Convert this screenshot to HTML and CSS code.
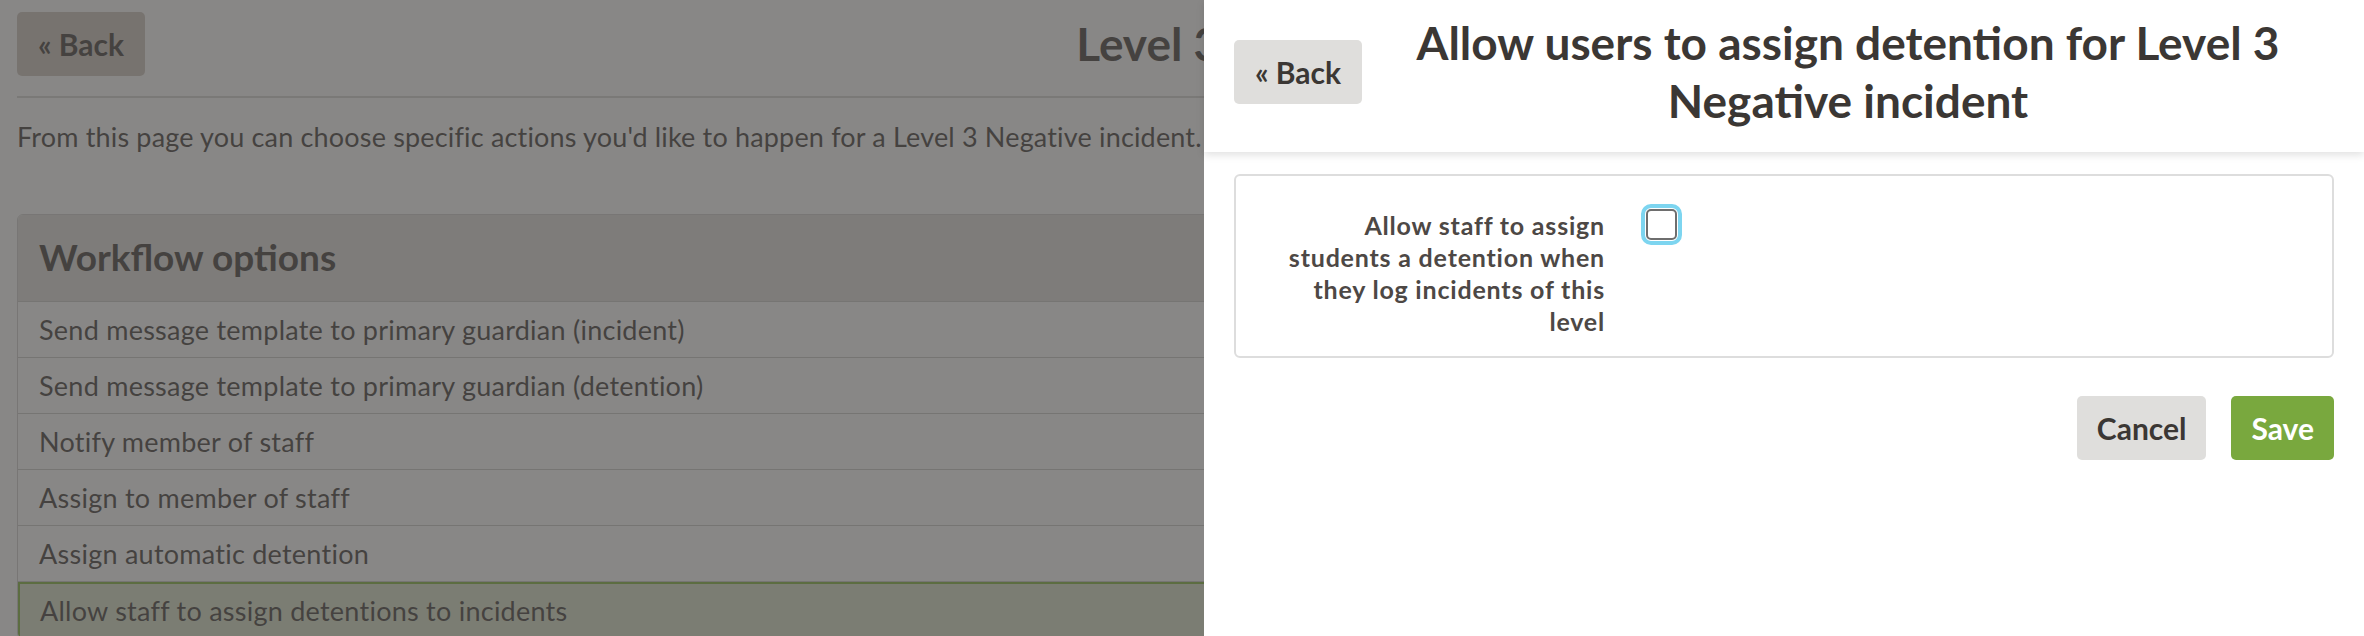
FILE: index.html
```html
<!DOCTYPE html>
<html lang="en">
<head>
<meta charset="utf-8">
<title>Level 3 Negative incident workflow</title>
<link rel="stylesheet" href="styles.css">
</head>
<body>
  <main class="page">
    <header class="page-head">
      <a class="btn btn-back btn-back--page" href="#">« Back</a>
      <h1 class="page-title">Level 3 Negative</h1>
    </header>
    <p class="intro">From this page you can choose specific actions you'd like to happen for a Level 3 Negative incident.</p>
    <section class="panel">
      <div class="panel-head"><h2 class="panel-title">Workflow options</h2></div>
      <ul class="options">
        <li class="option">Send message template to primary guardian (incident)</li>
        <li class="option">Send message template to primary guardian (detention)</li>
        <li class="option">Notify member of staff</li>
        <li class="option">Assign to member of staff</li>
        <li class="option">Assign automatic detention</li>
        <li class="option option--active">Allow staff to assign detentions to incidents</li>
      </ul>
    </section>
  </main>

  <div class="overlay"></div>

  <aside class="drawer">
    <header class="drawer-head">
      <a class="btn btn-back" href="#">« Back</a>
      <h2 class="drawer-title">Allow users to assign detention for Level 3 Negative incident</h2>
    </header>
    <div class="drawer-body">
      <div class="form-box">
        <div class="field">
          <label class="field-label" for="allow">Allow staff to assign students a detention when they log incidents of this level</label>
          <span class="checkbox" id="allow" role="checkbox" aria-checked="false" tabindex="0"></span>
        </div>
      </div>
      <div class="actions">
        <button class="btn btn-cancel" type="button">Cancel</button>
        <button class="btn btn-save" type="button">Save</button>
      </div>
    </div>
  </aside>
</body>
</html>
```

FILE: styles.css
```css
* { box-sizing: border-box; }

html, body {
  margin: 0;
  padding: 0;
  height: 100%;
  overflow: hidden;
  background: #ffffff;
  font-family: Lato, "Open Sans", "Liberation Sans", sans-serif;
  color: #3b3734;
}

.page {
  padding: 12px 17px 0 17px;
}

.page-head {
  display: flex;
  align-items: center;
  padding-bottom: 20px;
  border-bottom: 2px solid #d6d5d3;
}

.btn {
  display: inline-flex;
  align-items: center;
  justify-content: center;
  height: 64px;
  padding: 0 20px;
  border: 0;
  border-radius: 5px;
  font-family: Lato, "Open Sans", "Liberation Sans", sans-serif;
  font-weight: 700;
  font-size: 30px;
  color: #3b3734;
  text-decoration: none;
  background: #dfdedc;
  cursor: pointer;
}

.btn-back { width: 128px; }
.btn-back--page { background: #cec5bd; }

.page-title {
  flex: 1;
  margin: 0;
  text-align: center;
  font-size: 46px;
  line-height: 58px;
  font-weight: 700;
}

.intro {
  margin: 21px 0 0 0;
  font-size: 27px;
  line-height: 36px;
  letter-spacing: 0.17px;
}

.panel {
  margin-top: 59px;
  border: 1px solid #cfcecc;
  border-radius: 6px;
  overflow: hidden;
}

.panel-head {
  background: #e0dfdd;
  padding: 18px 21px 20px 21px;
  border-bottom: 1px solid #cbcac8;
}

.panel-title {
  margin: 0;
  font-size: 37px;
  line-height: 48px;
  font-weight: 700;
}

.options {
  list-style: none;
  margin: 0;
  padding: 0;
}

.option {
  height: 56px;
  display: flex;
  align-items: center;
  padding: 0 21px;
  font-size: 27px;
  letter-spacing: 0.25px;
  border-bottom: 1px solid #cbcac8;
}

.option--active {
  background: #dae2c6;
  border: 2px solid #7fb236;
  padding-left: 20px;
}

.overlay {
  position: fixed;
  inset: 0;
  background: rgba(74, 73, 71, 0.66);
}

.drawer {
  position: fixed;
  top: 0;
  right: 0;
  bottom: 0;
  width: 1160px;
  background: #ffffff;
  display: flex;
  flex-direction: column;
}

.drawer-head {
  height: 152px;
  padding: 0 30px 8px 30px;
  display: flex;
  align-items: center;
  box-shadow: 0 3px 8px rgba(0, 0, 0, 0.12);
  position: relative;
}

.drawer-title {
  flex: 1;
  margin: 0;
  text-align: center;
  font-size: 46px;
  line-height: 58px;
  font-weight: 700;
  color: #3b3734;
}

.drawer-body {
  padding: 22px 30px;
}

.form-box {
  border: 2px solid #dddddd;
  border-radius: 6px;
  height: 184px;
  padding: 33px 20px 0 39px;
}

.field {
  display: flex;
  align-items: flex-start;
}

.field-label {
  width: 330px;
  text-align: right;
  font-size: 25px;
  line-height: 32px;
  letter-spacing: 0.8px;
  font-weight: 700;
  color: #4d4845;
}

.checkbox {
  margin-left: 41px;
  width: 31px;
  height: 31px;
  border: 2px solid #6e6e6e;
  border-radius: 5px;
  outline: 4px solid #7dd5f0;
  outline-offset: 1px;
  background: #fff;
}

.actions {
  display: flex;
  justify-content: flex-end;
  gap: 25px;
  margin-top: 38px;
}

.btn-cancel { background: #dfdedc; }
.btn-save { background: #79a83e; color: #ffffff; }
```
